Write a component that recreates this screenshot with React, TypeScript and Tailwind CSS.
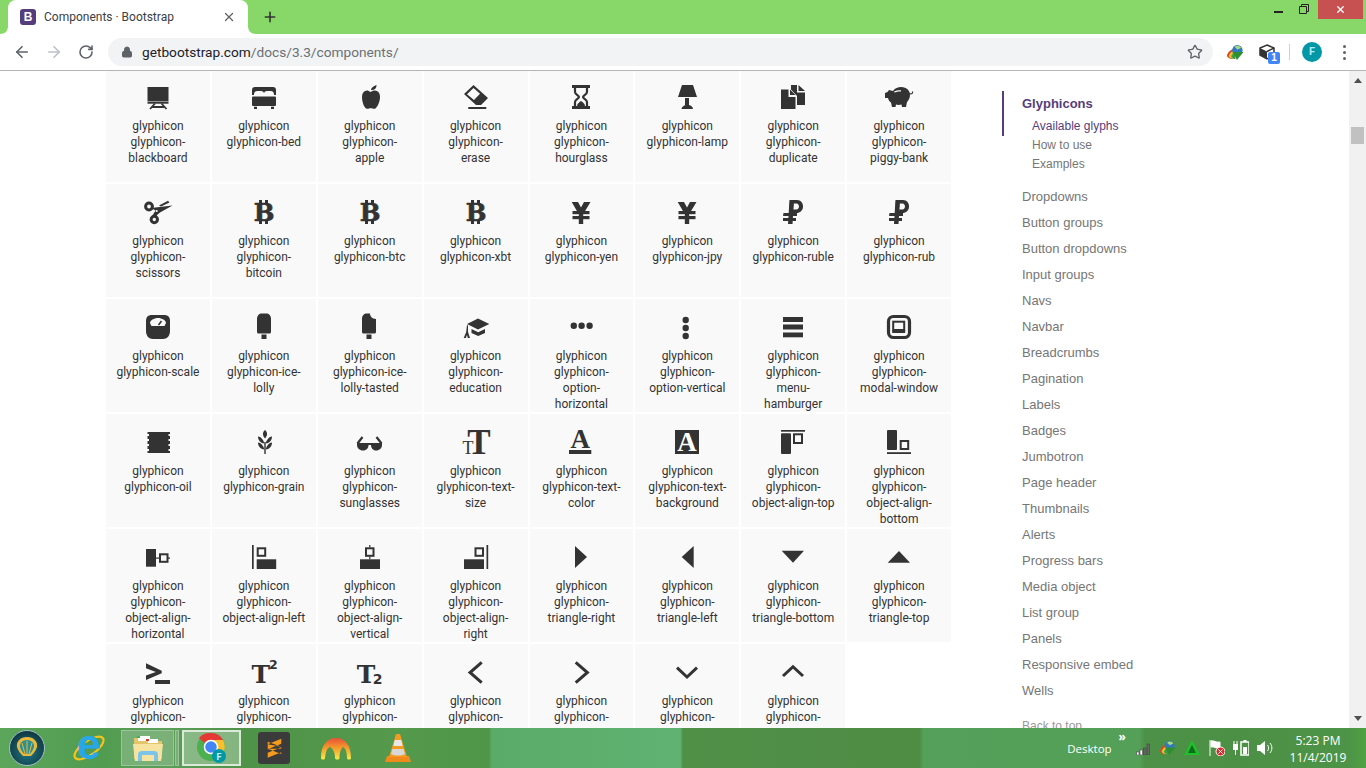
import React from "react";
import { ArrowLeft, ArrowRight, RotateCw, Lock, Star, X, Plus } from "lucide-react";

const D = "#333";
const S = (p: { d: string; w?: number }) => (
  <path d={p.d} fill="none" stroke={D} strokeWidth={p.w ?? 2} />
);
const serif = "'DejaVu Serif', serif";

const icons: Record<string, React.ReactNode> = {
  blackboard: (<><rect x="1.5" y="2" width="21" height="14" /><rect x="1.5" y="16.5" width="21" height="2.2" /><S d="M4 24L9 18.5M20.5 24L15.5 18.5M6 22H18" w={1.8} /></>),
  bed: (<><path d="M3 2H21A3 3 0 0 1 24 5V10H22C22 7 21 6 18 6H15C13 6 12.5 7 12 8C11.5 7 11 6 9 6H6C3 6 2 7 2 10H0V5A3 3 0 0 1 3 2Z" /><rect y="11.5" width="24" height="9.5" rx="1" /><rect x="2" y="21.7" width="3" height="2.3" /><rect x="19" y="21.7" width="3" height="2.3" /></>),
  apple: (<><path d="M12.5 7C14.5 5.5 17 5 19 6C21 7 22 9 22 12C22 16 20 21 18 23C17 24 15.5 24 14.5 23.5C13.5 23 12 23 11 23.5C10 24 8.500 24 7.500 23C5.500 21 4 16 4 12C4 9 5 7 7 6C9 5 10.500 5.500 12.500 7Z" /><path d="M13 5C13 3 15 1 18.500 0C18.500 3 17 5 13 5Z" /></>),
  erase: (<><path fillRule="evenodd" d="M9.500 0L24 13L17 20H12L0 9ZM9.500 3L3 9.200L10 15L16 8.700Z" /><rect x="4.300" y="22" width="18" height="2" /></>),
  hourglass: (<><rect x="3" y="0" width="18" height="3" /><rect x="3" y="21" width="18" height="3" /><S d="M6 3V7C6 9.500 10 10.500 10 12C10 13.500 6 14.500 6 17V21M18 3V7C18 9.500 14 10.500 14 12C14 13.500 18 14.500 18 17V21" w={2.2} /><path d="M8 21C8 19 10 17 12 16C14 17 16 19 16 21Z" /></>),
  lamp: (<><path d="M7 0H18L22 12H3Z" /><rect x="10" y="13" width="4" height="7" /><path d="M6.500 24C6.500 22 9 20.500 10.500 20H14C16 20.500 18 22 18 24Z" /></>),
  duplicate: (<><path d="M0 4.500H7.500V12H14.500V24H0Z" /><path d="M9 4.500L14.500 10H9Z" /><path d="M10 0H16V7.500H24V20H16V11L10 4.500Z" /><path d="M17.500 0L24 6H17.500Z" /></>),
  "piggy-bank": (<><path fillRule="evenodd" d="M2 5L6 6C8 3 11 2 14 2C20 2 23 6 23 10C23 13 21.500 15.500 20 17L19 22H15L14.500 19.500C13 20 10 20 9 19.500L8.500 22H5L4 17.500C2.500 16.500 1.500 15 1 13H-2V8L.5 7ZM7 6.500C9 5.500 12 5 14 5.300L14 6.500C12 6.300 9.500 6.800 7.700 7.600Z" /><S d="M22.500 8.500C24.500 9.500 26 8.500 25.500 6.500" w={1.2} /></>),
  scissors: (<><circle cx="3" cy="6.500" r="3.400" fill="none" stroke={D} strokeWidth="3" /><circle cx="8.300" cy="19.500" r="3.200" fill="none" stroke={D} strokeWidth="3" /><path d="M5 8L26.500 5.500L14 12.500L11 15L10 17.500L6.500 15.500L9.500 10.500Z" /><path d="M13 5.500L22 .7L23.500 2.500L15 6.500Z" /><circle cx="10.700" cy="11" r="1.100" fill="#f9f9f9" /></>),
  bitcoin: "B",
  btc: "B",
  xbt: "B",
  yen: "Y",
  jpy: "Y",
  ruble: "R",
  rub: "R",
  scale: (<><path fillRule="evenodd" d="M6 0H18C22 0 24 2 24 6V16C24 21 21 24 17 24H7C3 24 0 21 0 16V6C0 2 2 0 6 0ZM4 8L5.500 11H18.500L20 8C20 5.500 16 3 12 3C8 3 4 5.500 4 8Z" /><S d="M12.500 10L15.500 6" w={1.6} /></>),
  "ice-lolly": (<><path d="M10 -1.500H14C17 -1.500 19 .5 19 4V17C19 18 18 18.500 17 18.500H7C6 18.500 5 18 5 17V4C5 .5 7 -1.500 10 -1.500Z" /><rect x="9.500" y="19.500" width="5" height="4.500" /></>),
  "ice-lolly-tasted": (<><path d="M9 -1.500H12C12 1 14 4 18 4V17C18 18 17 18.500 16 18.500H6C5 18.500 4 18 4 17V4C4 .5 6 -1.500 9 -1.500Z" /><rect x="8.500" y="19.500" width="5" height="4.500" /></>),
  education: (<><path d="M14 3.500L25.300 9L14 14.500L3 9Z" /><path d="M7.500 14L14.200 17.300L21 14V18L14.200 21L7.500 18Z" /><path d="M3 10L4 10.500V17L6 23H3.800L3 20L1.800 23H-.3L2.200 17Z" /></>),
  "option-horizontal": (<><circle cx="4.800" cy="10.700" r="3.200" /><circle cx="12.600" cy="10.700" r="3.200" /><circle cx="20.600" cy="10.700" r="3.200" /></>),
  "option-vertical": (<><circle cx="10.700" cy="5" r="3.200" /><circle cx="10.700" cy="13" r="3.200" /><circle cx="10.700" cy="21" r="3.200" /></>),
  "menu-hamburger": (<><rect x="2" y="2" width="20" height="5" /><rect x="2" y="9.500" width="20" height="5" /><rect x="2" y="17.500" width="20" height="4.800" /></>),
  "modal-window": (<><rect x="1.500" y="1.500" width="21" height="21" rx="5" fill="none" stroke={D} strokeWidth="3.200" /><rect x="6.200" y="6.700" width="11" height="8.300" fill="none" stroke={D} strokeWidth="2" /><rect x="5.200" y="15" width="13" height="3" /></>),
  oil: (<><rect x="3" y="2" width="19.500" height="21" /><path d="M1.500 2H4V4H1.500ZM1.500 6H4V9H1.500ZM1.500 11H4V14H1.500ZM1.500 16H4V19H1.500ZM1.500 21H4V23H1.500ZM22 2H24V4H22ZM22 6H24V9H22ZM22 11H24V14H22ZM22 16H24V19H22ZM22 21H24V23H22Z" /></>),
  grain: (<><path d="M13 0C15.500 2 16 5 13 8.500C10 5 10.500 2 13 0Z" /><path d="M6 6.500C9.500 7 11.500 10 12.300 13.500C9 13.500 6 10.500 6 6.500Z" /><path d="M20 6.500C16.500 7 14.500 10 13.700 13.500C17 13.500 20 10.500 20 6.500Z" /><path d="M6 12.500C9.500 13 11.500 16 12.300 19.500C9 19.500 6 16.500 6 12.500Z" /><path d="M20 12.500C16.500 13 14.500 16 13.700 19.500C17 19.500 20 16.500 20 12.500Z" /><rect x="12.300" y="12" width="1.400" height="12" /></>),
  sunglasses: (<><path d="M-1 13H10.500V15C10.500 18 8.500 20.500 5 20.500C1.500 20.500 -1 18 -1 15Z" /><path d="M13 13H24V15C24 18 21.500 20.500 18 20.500C15 20.500 13 18 13 15Z" /><rect x="10" y="13" width="3.500" height="2" /><S d="M-.5 13.500L4.500 7M23.500 13.500L18.500 7" w={2.2} /></>),
  "text-size": (<><text x="15" y="24" fontSize="35" textAnchor="middle" fontWeight="700" fontFamily="'Liberation Serif', serif" fill={D}>T</text><text x="4" y="24" fontSize="18" textAnchor="middle" fontFamily="'Liberation Serif', serif" fill={D}>T</text></>),
  "text-color": (<><text x="11.200" y="18" fontSize="27" textAnchor="middle" fontWeight="700" fontFamily="'Liberation Serif', serif" fill={D}>A</text><rect x="0" y="20" width="22.300" height="4" /></>),
  "text-background": (<><rect width="24" height="24" /><text x="12" y="21" fontSize="27" textAnchor="middle" fontWeight="700" fontFamily="'Liberation Serif', serif" fill="#fff">A</text></>),
  "object-align-top": (<><rect x="0" y="0" width="24" height="1.700" /><rect x="0" y="3.300" width="10" height="20.700" rx="1" /><rect x="13" y="4.300" width="8" height="8.700" fill="none" stroke={D} strokeWidth="2" /></>),
  "object-align-bottom": (<><rect x="0" y="0" width="10" height="20" rx="1" /><rect x="13.700" y="11" width="7.500" height="8" fill="none" stroke={D} strokeWidth="2" /><rect x="0" y="22.200" width="24" height="1.800" /></>),
  "object-align-horizontal": (<><rect x="0" y="4" width="10" height="17.700" /><rect x="14" y="9.300" width="7.500" height="7.500" fill="none" stroke={D} strokeWidth="2" /><rect x="10" y="12.500" width="3" height="1.200" /><rect x="22" y="12.500" width="2" height="1.200" /></>),
  "object-align-left": (<><rect x="0" y="0" width="1.700" height="24" /><rect x="5.700" y="3.300" width="7.500" height="7.500" fill="none" stroke={D} strokeWidth="2" /><rect x="4.700" y="14.300" width="19.500" height="9.700" /></>),
  "object-align-vertical": (<><rect x="2" y="14.300" width="20" height="9.700" /><rect x="8" y="3.300" width="7.500" height="7.500" fill="none" stroke={D} strokeWidth="2" /><rect x="11.200" y="0" width="1.200" height="2.500" /><rect x="11.200" y="11.700" width="1.200" height="2.600" /></>),
  "object-align-right": (<><rect x="0" y="14.300" width="20" height="9.700" /><rect x="11.500" y="3.300" width="7.500" height="7.500" fill="none" stroke={D} strokeWidth="2" /><rect x="22.500" y="0" width="1.700" height="24" /></>),
  "triangle-right": <path d="M6 1L18 12L6 23Z" />,
  "triangle-left": <path d="M18.700 1L6.700 12L18.700 23Z" />,
  "triangle-bottom": <path d="M.7 5.700H23L12 17.700Z" />,
  "triangle-top": <path d="M.7 17.700H23L12 6Z" />,
  console: (<><path d="M0 3.300L15.700 10.800V13.300L0 20V15.500L9.800 12L0 8.200Z" /><rect x="9" y="20" width="15" height="4" /></>),
  superscript: (<><text x="8.700" y="22.700" fontSize="25" textAnchor="middle" fontWeight="700" fontFamily={serif} fill={D}>T</text><text x="21.400" y="9.300" fontSize="12.500" textAnchor="middle" fontWeight="700" fontFamily="'DejaVu Sans', sans-serif" fill={D}>2</text></>),
  subscript: (<><text x="8" y="22.700" fontSize="25" textAnchor="middle" fontWeight="700" fontFamily={serif} fill={D}>T</text><text x="19.500" y="24" fontSize="14" textAnchor="middle" fontWeight="700" fontFamily="'DejaVu Sans', sans-serif" fill={D}>2</text></>),
  "menu-left": <S d="M17.700 2.300L6 12.500L17.700 22.700" w={3} />,
  "menu-right": <S d="M6.700 2.300L18.400 12.500L6.700 22.700" w={3} />,
  "menu-down": <S d="M2 7.700L12 17L22 7.700" w={3} />,
  "menu-up": <S d="M2 16L12 6.700L22 16" w={3} />,
};

const Bitcoin = () => (
  <>
    <rect x="7" width="3" height="4" />
    <rect x="13" width="3" height="4" />
    <rect x="7" y="20" width="3" height="4" />
    <rect x="13" y="20" width="3" height="4" />
    <text x="12" y="21" fontSize="24.500" fontWeight="700" textAnchor="middle" fontFamily={serif} fill={D} stroke={D} strokeWidth=".7">B</text>
  </>
);
const Yen = () => (
  <>
    <path d="M2.700 2H9L12 7.500L15 2H21.500L15.500 12H8.500Z" />
    <rect x="3.500" y="11" width="17" height="3.200" />
    <rect x="3.500" y="16" width="17" height="3.200" />
    <rect x="9.800" y="11" width="4.400" height="13" />
  </>
);
const Ruble = () => (
  <>
    <path fillRule="evenodd" d="M9 0H16C20 0 22 3 22 6.500C22 10.500 19 13 15.500 13H8ZM12.500 3.500L12 9.500H15.500C17 9.500 18 8 18 6.500C18 5 17 3.500 15.500 3.500Z" />
    <path d="M8.500 0H13L11.500 24H7Z" />
    <path d="M2.500 13H16V16H2Z" />
    <path d="M2 18H15V21H2Z" />
  </>
);

function Glyph({ name }: { name: string }) {
  let body = icons[name];
  if (body === "B") body = <Bitcoin />;
  if (body === "Y") body = <Yen />;
  if (body === "R") body = <Ruble />;
  return (
    <svg viewBox="0 0 24 24" fill={D} className="w-6 h-6 block mx-auto overflow-visible">
      {body}
    </svg>
  );
}

const names = Object.keys(icons);

function Cell({ name, last }: { name: string; last: boolean }) {
  return (
    <div className="h-[113px] bg-[#f9f9f9] pt-4 px-[10px] overflow-hidden">
      <Glyph name={name} />
      <div className={last ? "mt-[9px] h-8 overflow-hidden text-[12px] leading-4 text-[#333] text-center font-['Roboto',sans-serif]" : "mt-[9px] text-[12px] leading-4 text-[#333] text-center font-['Roboto',sans-serif]"}>
        glyphicon glyphicon-{name}
      </div>
    </div>
  );
}

const navs = ["Dropdowns", "Button groups", "Button dropdowns", "Input groups", "Navs", "Navbar", "Breadcrumbs", "Pagination", "Labels", "Badges", "Jumbotron", "Page header", "Thumbnails", "Alerts", "Progress bars", "Media object", "List group", "Panels", "Responsive embed", "Wells"];

function Sidebar() {
  return (
    <div className="ml-[51px] mt-[20px] w-[296px] shrink-0 font-['Liberation_Sans',sans-serif]">
      <div className="h-[45px] border-l-2 border-[#563d7c] pl-[18px]">
        <div className="h-[25px] pt-px flex items-center text-[13px] font-bold text-[#563d7c]">Glyphicons</div>
        <div className="h-[19px] flex items-center pl-[10px] text-[12px] text-[#563d7c]">Available glyphs</div>
      </div>
      <div className="-mt-px pl-[30px] text-[12px] text-[#767676]">
        <div className="h-[19px] flex items-center">How to use</div>
        <div className="h-[19px] flex items-center">Examples</div>
      </div>
      <div className="mt-[11px] pl-[20px] text-[13px] text-[#767676] font-medium">
        {navs.map((n) => (
          <div key={n} className="h-[26px] flex items-center">{n}</div>
        ))}
      </div>
      <div className="mt-[9px] pl-[20px] h-[26px] flex items-center text-[12px] text-[#999]">Back to top</div>
    </div>
  );
}

function Scrollbar() {
  return (
    <div className="w-[17px] ml-auto shrink-0 bg-[#f1f1f1] flex flex-col items-center">
      <svg viewBox="0 0 8 5" className="w-2 h-[5px] mt-[7px]" fill="#505050"><path d="M4 0L8 5H0Z" /></svg>
      <div className="mt-[44px] w-[13px] h-[17px] bg-[#c1c1c1]" />
      <svg viewBox="0 0 8 5" className="w-2 h-[5px] mt-auto mb-[7px]" fill="#505050"><path d="M0 0H8L4 5Z" /></svg>
    </div>
  );
}

function TabBar() {
  return (
    <div className="h-[34px] bg-[#87d868] flex items-start pl-2 shrink-0">
      <div className="relative w-[240px] h-[34px] bg-white rounded-t-[8px] flex items-center pl-3 pr-[12px]">
        <svg viewBox="0 0 8 8" className="absolute -left-2 bottom-0 w-2 h-2" fill="#fff"><path d="M8 0V8H0C5 8 8 5 8 0Z" /></svg>
        <svg viewBox="0 0 8 8" className="absolute -right-2 bottom-0 w-2 h-2" fill="#fff"><path d="M0 0V8H8C3 8 0 5 0 0Z" /></svg>
        <div className="w-4 h-4 rounded-[3px] bg-[#563d7c] text-white text-[12px] leading-4 font-bold text-center font-['Liberation_Sans',sans-serif]">B</div>
        <span className="ml-2 text-[12px] text-[#3c4043] font-['Roboto',sans-serif]">Components · Bootstrap</span>
        <X size={14} strokeWidth={2.2} className="ml-auto text-[#5f6368]" />
      </div>
      <Plus size={16} strokeWidth={2.4} className="ml-[14px] mt-[9px] text-[#333]" />
      <div className="ml-auto flex items-start">
        <div className="w-[9px] h-[2px] mt-[11px] bg-[#222] mr-[16px]" />
        <svg viewBox="0 0 10 10" className="w-[10px] h-[10px] mt-[4px] mr-[9px]" fill="none" stroke="#222"><path d="M2.500 2.500V.5H9.500V7.500H7.500M.5 2.500H7.500V9.500H.5Z" /></svg>
        <div className="w-[45px] h-[19px] bg-[#c75050] flex items-center justify-center mr-[3px]">
          <X size={11} strokeWidth={3} className="text-white" />
        </div>
      </div>
    </div>
  );
}

function Idm({ s = 18 }: { s?: number }) {
  return (
    <svg viewBox="0 0 18 18" width={s} height={s}>
      <path d="M0 12C1 8 5 5 9 5C7 8 6 11 6 16C2 16 0 14 0 12Z" fill="#d9482b" />
      <path d="M2 12.500C3 9.500 6 7 9 7C8 9 7 12 7.500 16C5 16 2 15 2 12.500Z" fill="#e8c42c" />
      <path d="M4.500 13C5 11 7 9 9 9C8.500 11 8.500 13 9 16C7 16 4.500 15 4.500 13Z" fill="#3f9c4a" />
      <circle cx="11" cy="6.500" r="5.500" fill="#2f78c4" />
      <path d="M8 3C10 1 14 1.500 15 4L11 6Z" fill="#a9d67a" />
      <path d="M6 8.500H17.500L10.500 17Z" fill="#2d8f2d" />
    </svg>
  );
}

function Toolbar() {
  return (
    <div className="h-[36px] bg-white flex items-center shrink-0 relative">
      <ArrowLeft size={18} strokeWidth={2.2} className="ml-[13px] text-[#5f6368]" />
      <ArrowRight size={18} strokeWidth={2.2} className="ml-[14px] text-[#bdc1c6]" />
      <RotateCw size={16} strokeWidth={2.4} className="ml-[15px] text-[#5f6368]" />
      <div className="ml-[14px] w-[1105px] h-[28px] rounded-full bg-[#f1f3f4] flex items-center pl-[13px] pr-[10px]">
        <Lock size={12} fill="#5f6368" className="text-[#5f6368]" />
        <span className="ml-[9px] mt-px text-[13.7px] text-[#202124] font-['Roboto',sans-serif]">
          getbootstrap.com<span className="text-[#6b7075]">/docs/3.3/components/</span>
        </span>
        <Star size={16} strokeWidth={2} className="ml-auto text-[#5f6368]" />
      </div>
      <div className="ml-[14px]"><Idm s={17} /></div>
      <div className="ml-[15px] relative w-[17px] h-[17px]">
        <svg viewBox="0 0 16 17" className="w-4 h-[17px]"><path d="M8 1L15 4V11L8 15L1 11V4Z" fill="#fff" stroke="#333" strokeWidth="1.500" /><path d="M1 4L8 7.500V15L1 11Z" fill="#333" /><path d="M8 7.500L15 4" stroke="#333" strokeWidth="1.500" /></svg>
        <div className="absolute left-[9px] top-[8px] w-3 h-3 rounded-[2px] bg-[#4285f4] text-white text-[10px] leading-3 font-bold text-center font-['Liberation_Sans',sans-serif]">1</div>
      </div>
      <div className="ml-[13px] w-px h-4 bg-[#d0d0d0]" />
      <div className="ml-[12px] w-5 h-5 rounded-full bg-[#0097a7] text-[#b2ebf2] text-[11px] leading-5 font-bold text-center font-['Roboto',sans-serif]">F</div>
      <div className="ml-[21px] flex flex-col gap-[3px]">
        <div className="w-[3px] h-[3px] rounded-full bg-[#5f6368]" />
        <div className="w-[3px] h-[3px] rounded-full bg-[#5f6368]" />
        <div className="w-[3px] h-[3px] rounded-full bg-[#5f6368]" />
      </div>
    </div>
  );
}

function Taskbar() {
  return (
    <div className="h-10 shrink-0 flex items-center text-white bg-[linear-gradient(90deg,#5ca65c_0%,#519c50_7%,#5a9e58_12%,#4f9348_18%,#54994c_29%,#4f9648_35.8%,#5aab68_36%,#60b273_49.8%,#4f8f46_50%,#4f8d45_67.3%,#55a05a_67.6%,#55a058_83.4%,#4d9148_83.8%,#4c9045_90.8%,#4d9448_98.8%,#4fa240_100%)] font-['Open_Sans',sans-serif]">
      <svg viewBox="0 0 36 36" className="w-9 h-9 ml-[9px]">
        <defs><radialGradient id="orb" cx="50%" cy="60%" r="60%"><stop offset="0" stopColor="#1d7a86" /><stop offset="1" stopColor="#10343f" /></radialGradient></defs>
        <circle cx="18" cy="18" r="17.500" fill="url(#orb)" stroke="#a6c3c6" strokeWidth="1" />
        <path d="M18 7C11 7 7 12 8 17C9 21 12 24 14 26H22C24 24 27 21 28 17C29 12 25 7 18 7Z" fill="#e8b93e" />
        <path d="M18 10C13.500 10 10.500 13 11 17C11.500 20 14 22 15 24H21C22 22 24.500 20 25 17C25.500 13 22.500 10 18 10Z" fill="#2e8f90" />
        <path d="M18 11V24M13 13L16 24M23 13L20 24" stroke="#e8b93e" strokeWidth="1" />
      </svg>
      <svg viewBox="0 0 32 32" className="w-[32px] h-[32px] ml-[28px] overflow-visible">
        <ellipse cx="16" cy="16" rx="17" ry="7" transform="rotate(-35 16 16)" fill="none" stroke="#f2c41c" strokeWidth="2.200" />
        <text x="16" y="26.500" fontSize="43" textAnchor="middle" fontWeight="700" fontFamily="'Liberation Sans', sans-serif" fill="#27a6ea">e</text>
      </svg>
      <div className="ml-[16px] h-[36px] w-[58px] flex">
        <div className="w-[54px] h-[36px] border border-[#9cc49a] bg-white/20 flex items-center justify-center">
          <svg viewBox="0 0 32 28" className="w-[32px] h-[28px]">
            <path d="M2 4H12L14 7H30V25H2Z" fill="#e4c56b" />
            <rect x="6" y="2" width="12" height="5" fill="#fff" /><rect x="5" y="2" width="3" height="2" fill="#3fb54a" /><rect x="16" y="5" width="10" height="4" fill="#fff" /><rect x="14" y="5" width="3" height="2" fill="#d8402c" />
            <path d="M1 10H31L29 27H3Z" fill="#f7e3a0" />
            <path d="M6 27V20C6 18 8 17 10 17H22C24 17 26 18 26 20V27H22V21H10V27Z" fill="#7cc5ea" />
          </svg>
        </div>
        <div className="w-[4px] h-[36px] ml-px border border-[#9cc49a] bg-white/20" />
      </div>
      <div className="ml-[3px] w-[59px] h-[36px] border-2 border-[#dbe9d8] bg-white/30 flex items-center justify-center relative">
        <svg viewBox="0 0 32 32" className="w-8 h-8">
          <circle cx="15" cy="15" r="14" fill="#4caf50" />
          <path d="M15 1A14 14 0 0 1 27 8H15A7 7 0 0 0 8.500 11L3 6A14 14 0 0 1 15 1Z" fill="#e53935" />
          <path d="M27 8A14 14 0 0 1 18 28.500L22 15A7 7 0 0 0 15 8Z" fill="#fbc02d" />
          <circle cx="15" cy="15" r="6.500" fill="#4285f4" stroke="#fff" strokeWidth="1.500" />
          <circle cx="23" cy="24" r="7" fill="#0097a7" />
          <text x="23" y="27.500" fontSize="9" textAnchor="middle" fontWeight="700" fontFamily="'Roboto', sans-serif" fill="#c9f1f5">F</text>
        </svg>
      </div>
      <div className="ml-[17px] w-8 h-8 rounded-[3px] bg-[#3b3b3b] flex items-center justify-center">
        <svg viewBox="0 0 20 24" className="w-[17px] h-[22px]" fill="#f49a1c"><path d="M2 7.500L18 1V7L2 13.500ZM18 10.500L2 4.500V7.500ZM2 13L18 19V13ZM2 17.500L18 11V17L2 23.500Z" /></svg>
      </div>
      <svg viewBox="0 0 30 24" className="ml-[31px] w-[30px] h-[24px]">
        <defs><linearGradient id="rb" x1="0" y1="0" x2="0" y2="1"><stop offset="0" stopColor="#e8503a" /><stop offset=".45" stopColor="#f39a2c" /><stop offset="1" stopColor="#f8ec4a" /></linearGradient></defs>
        <path d="M0 22C0 9 6 2 15 2C24 2 30 9 30 22C30 24 26 24 26 22C26 15 24 12 22 11C20 13 18.500 16 18.500 22C18.500 24 14 24 14 22C14 16 12 13 9 11C6 12 5 15 4 22C4 24 0 24 0 22Z" fill="url(#rb)" />
      </svg>
      <svg viewBox="0 0 26 30" className="ml-[34px] w-[26px] h-[30px]">
        <path d="M2 23H24L26 29H0Z" fill="#f08a1d" />
        <path d="M11 1H15L22 24H4Z" fill="#f59a23" />
        <path d="M9.700 7H16.300L17.600 13H8.400Z" fill="#e8e8e8" />
        <path d="M7.500 16H18.500L20 21C16 23 10 23 6 21Z" fill="#d8d8d8" />
      </svg>
      <div className="ml-auto flex items-center">
        <span className="text-[11.500px] mr-[7px] mt-px">Desktop</span>
        <span className="text-[12px] leading-none -mt-[22px] mr-[10px] font-bold">»</span>
        <svg viewBox="0 0 16 12" className="w-4 h-3 mr-2 mt-[2px]" fill="#fff" stroke="#444" strokeWidth=".6"><rect x=".5" y="9" width="2.500" height="3" /><rect x="4" y="7" width="2.500" height="5" /><rect x="7.500" y="5" width="2.500" height="7" fill="#666" /><rect x="11" y="1" width="2.500" height="11" fill="#666" /></svg>
        <div className="mr-2"><Idm s={16} /></div>
        <svg viewBox="0 0 16 16" className="w-4 h-4 mr-[9px]"><path d="M8 0L16 15H0Z" fill="#1fc02a" /><path d="M8 5L12 13H4Z" fill="#0c6e1c" /></svg>
        <svg viewBox="0 0 16 16" className="w-4 h-4 mr-2"><path d="M1 0V16M2 1C5 0 7 3 11 2V8C7 9 5 6 2 7Z" fill="#fff" stroke="#fff" /><circle cx="11.500" cy="11.500" r="4.500" fill="#d32f2f" stroke="#fff" /><path d="M9.500 9.500L13.500 13.500M13.500 9.500L9.500 13.500" stroke="#fff" /></svg>
        <svg viewBox="0 0 16 16" className="w-4 h-4 mr-2" fill="#fff"><rect x="0" y="4" width="5" height="6" /><path d="M1 1V4M4 1V4M2.500 10V15" stroke="#fff" /><rect x="8" y="2" width="8" height="13" fill="none" stroke="#fff" strokeWidth="1.500" /><rect x="10" y="7" width="4" height="7" /><rect x="10.500" y="0" width="3" height="2" /></svg>
        <svg viewBox="0 0 16 16" className="w-4 h-4 mr-[11px]" fill="#fff"><path d="M0 5H3L8 1V15L3 11H0Z" /><path d="M10.500 5C12 7 12 9 10.500 11M13 3C15.500 6 15.500 10 13 13" stroke="#fff" fill="none" /></svg>
        <div className="w-[68px] mr-[14px] text-[12px] leading-[17px] text-center mt-[1px]">
          <div>5:23 PM</div>
          <div>11/4/2019</div>
        </div>
      </div>
    </div>
  );
}

export default function App() {
  return (
    <div className="w-[1366px] h-[768px] flex flex-col overflow-hidden bg-white">
      <TabBar />
      <Toolbar />
      <div className="h-px bg-[#b5b5b5] shrink-0" />
      <div className="flex-1 min-h-0 flex overflow-hidden">
        <div className="ml-[106px] w-[845px] shrink-0 -mt-[2px] grid grid-cols-8 gap-x-[2px] gap-y-[2px] content-start">
          {names.map((n, i) => (
            <Cell key={n} name={n} last={i >= 40} />
          ))}
        </div>
        <Sidebar />
        <Scrollbar />
      </div>
      <Taskbar />
    </div>
  );
}
